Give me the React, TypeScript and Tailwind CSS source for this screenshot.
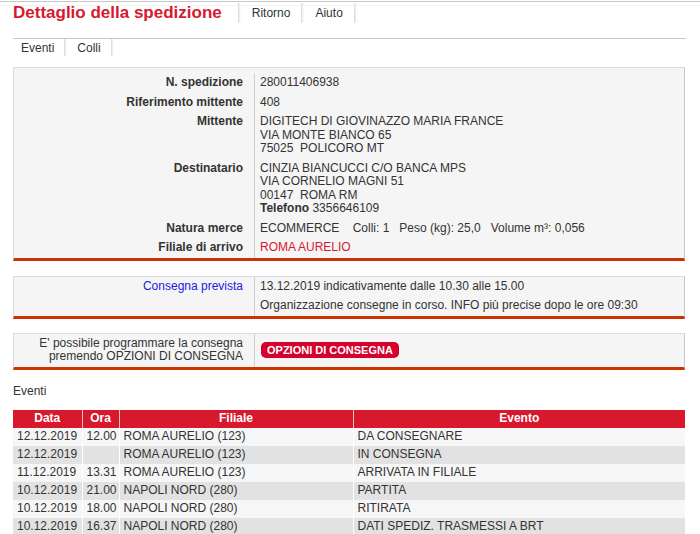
import React from "react";

const Sep = ({ h }: { h: string }) => (
  <div className={`w-[3px] ${h} bg-[linear-gradient(to_right,#d9d4d4,#f3eded,transparent)]`} />
);

const labelCls = "pr-[11px] text-right font-bold py-[3px]";
const valueCls = "border-l border-[#d0d0d0] pl-[5px] py-[3px]";

const events = [
  ["12.12.2019", "12.00", "ROMA AURELIO (123)", "DA CONSEGNARE"],
  ["12.12.2019", "", "ROMA AURELIO (123)", "IN CONSEGNA"],
  ["11.12.2019", "13.31", "ROMA AURELIO (123)", "ARRIVATA IN FILIALE"],
  ["10.12.2019", "21.00", "NAPOLI NORD (280)", "PARTITA"],
  ["10.12.2019", "18.00", "NAPOLI NORD (280)", "RITIRATA"],
  ["10.12.2019", "16.37", "NAPOLI NORD (280)", "DATI SPEDIZ. TRASMESSI A BRT"],
];

export default function App() {
  return (
    <div className="w-[700px] h-[534px] overflow-hidden bg-white font-['Liberation_Sans',Arial,sans-serif] text-[12px] leading-[13.5px] text-[#333]">
      <div className="mt-[1px] h-px bg-[#c8c8c8]" />
      <div className="h-px bg-[#f4f4f4] mt-[3px] -mb-[4px]" />
      {/* header */}
      <div className="flex h-[22px] pl-[13px]">
        <div className="text-[17px] font-bold leading-[22px] text-[#d7192d]">Dettaglio della spedizione</div>
        <div className="ml-[16px] mt-[1px]"><Sep h="h-[20px]" /></div>
        <div className="px-[11px] leading-[22px]">Ritorno</div>
        <div className="mt-[1px]"><Sep h="h-[20px]" /></div>
        <div className="px-[11px] leading-[22px]">Aiuto</div>
        <div className="mt-[1px]"><Sep h="h-[20px]" /></div>
      </div>
      <div className="mx-[13px] mt-[14px] h-px w-[673px] bg-[#c8c8c8]" />
      {/* tabs */}
      <div className="ml-[13px] flex h-[18px]">
        <div className="pl-[8px] pr-[10px] leading-[19px]">Eventi</div>
        <Sep h="h-[17px]" />
        <div className="pl-[10px] pr-[10px] leading-[19px]">Colli</div>
        <Sep h="h-[17px]" />
      </div>

      {/* main box */}
      <div className="ml-[13px] mt-[10px] w-[672px] border-l border-r border-t border-[#dcdcdc] border-r-[#c8c8c8] border-b-[3px] border-b-[#cc3300] bg-[#f5f5f5] pt-[5px]">
        <div className="grid grid-cols-[240px_1fr]">
          <div className={labelCls}>N. spedizione</div>
          <div className={valueCls}>280011406938</div>
          <div className={labelCls}>Riferimento mittente</div>
          <div className={valueCls}>408</div>
          <div className={labelCls}>Mittente</div>
          <div className={`${valueCls} whitespace-pre`}>
            <div>DIGITECH DI GIOVINAZZO MARIA FRANCE</div>
            <div>VIA MONTE BIANCO 65</div>
            <div>75025  POLICORO MT</div>
          </div>
          <div className={labelCls}>Destinatario</div>
          <div className={`${valueCls} whitespace-pre`}>
            <div>CINZIA BIANCUCCI C/O BANCA MPS</div>
            <div>VIA CORNELIO MAGNI 51</div>
            <div>00147  ROMA RM</div>
            <div><span className="font-bold">Telefono</span> 3356646109</div>
          </div>
          <div className={labelCls}>Natura merce</div>
          <div className={`${valueCls} whitespace-pre`}>ECOMMERCE    Colli: 1   Peso (kg): 25,0   Volume m³: 0,056</div>
          <div className={labelCls}>Filiale di arrivo</div>
          <div className={`${valueCls} text-[#d9182d]`}>ROMA AURELIO</div>
        </div>
      </div>

      {/* consegna prevista */}
      <div className="ml-[13px] mt-[15px] w-[672px] border-l border-r border-t border-[#dcdcdc] border-r-[#c8c8c8] border-b-[3px] border-b-[#cc3300] bg-[#f5f5f5]">
        <div className="grid grid-cols-[240px_1fr]">
          <div className="pr-[11px] pt-[3px] text-right text-[#1a1ae6]">Consegna prevista</div>
          <div className="border-l border-[#d0d0d0] pl-[5px] pt-[3px] pb-[3px]">
            <div className="pb-[6px]">13.12.2019 indicativamente dalle 10.30 alle 15.00</div>
            <div>Organizzazione consegne in corso. INFO più precise dopo le ore 09:30</div>
          </div>
        </div>
      </div>

      {/* opzioni */}
      <div className="ml-[13px] mt-[14px] w-[672px] border-l border-r border-t border-[#dcdcdc] border-r-[#c8c8c8] border-b-[3px] border-b-[#cc3300] bg-[#f5f5f5]">
        <div className="grid grid-cols-[240px_1fr]">
          <div className="pr-[11px] py-[3px] text-right">
            <div>E' possibile programmare la consegna</div>
            <div>premendo OPZIONI DI CONSEGNA</div>
          </div>
          <div className="flex items-center border-l border-[#d0d0d0] pl-[6px]">
            <span className="rounded-[5px] bg-[#d6002c] px-[6px] text-[11px] font-bold leading-[16px] text-white">OPZIONI DI CONSEGNA</span>
          </div>
        </div>
      </div>

      <div className="ml-[13px] mt-[14px] mb-[12px] leading-[14px]">Eventi</div>

      <table className="ml-[13px] w-[672px] border-collapse">
        <thead>
          <tr className="h-[18px] bg-[#d8182c] font-bold text-white">
            <th className="w-[69px] p-0 text-center font-bold">Data</th>
            <th className="w-[37px] border-l border-[#f0c0c0] p-0 text-center font-bold">Ora</th>
            <th className="w-[234px] border-l border-[#f0c0c0] p-0 text-center font-bold">Filiale</th>
            <th className="border-l border-[#f0c0c0] p-0 text-center font-bold">Evento</th>
          </tr>
        </thead>
        <tbody>
          {events.map((r, i) => (
            <tr key={i} className={`h-[18px] ${i % 2 === 0 ? "bg-[#f6f6f6]" : "bg-[#e2e2e2]"}`}>
              <td className="p-0 pl-[4px]">{r[0]}</td>
              <td className="border-l border-white p-0 pl-[4px]">{r[1]}</td>
              <td className="border-l border-white p-0 pl-[4px]">{r[2]}</td>
              <td className="border-l border-white p-0 pl-[4px]">{r[3]}</td>
            </tr>
          ))}
        </tbody>
      </table>
    </div>
  );
}
